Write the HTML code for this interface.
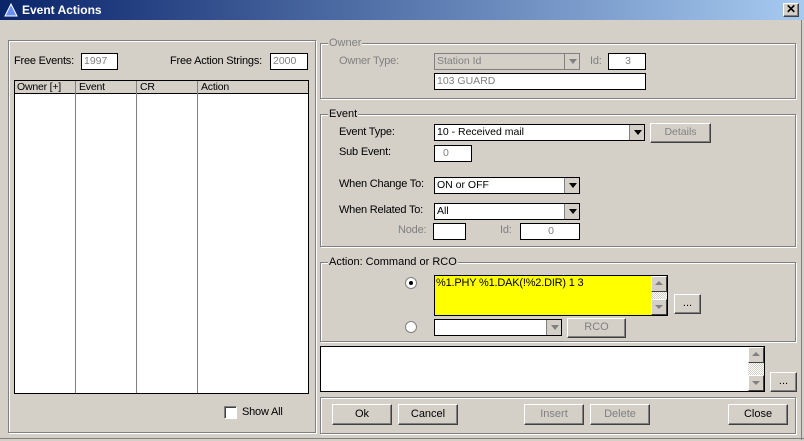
<!DOCTYPE html>
<html><head><style>
*{box-sizing:border-box;margin:0;padding:0}
body{width:804px;height:441px;background:#d4d0c8;font-family:"Liberation Sans",sans-serif;font-size:11px;color:#000;position:relative;overflow:hidden}
.a{position:absolute}
.title{left:0;top:0;width:804px;height:20px;background:linear-gradient(90deg,#0a246a,#a6caf0);color:#fff;font-weight:bold;font-size:12px;line-height:20px;padding-left:22px}
.grp{position:absolute;border:1px solid #808080;box-shadow:1px 1px 0 #fff, inset 1px 1px 0 #fff}
.lbl{position:absolute;background:#d4d0c8;padding:0 1px;line-height:12px;font-size:11px}
.gr{color:#808080}
.in{position:absolute;background:#fff;border:1px solid #000;line-height:14px;padding-left:2px;font-size:10.5px}
.dis{color:#808080}
.btn{position:absolute;background:#d4d0c8;border:1px solid;border-color:#fff #404040 #404040 #fff;box-shadow:inset -1px -1px 0 #808080;text-align:center;font-size:11px}
.arr{position:absolute;right:0;top:0;width:15px;height:100%;background:#d4d0c8;border-left:1px solid #808080}
.arr:after{content:"";position:absolute;left:4px;top:5px;border-left:4px solid transparent;border-right:4px solid transparent;border-top:5px solid #000}
.arr.g:after{border-top-color:#808080}
.sb{position:absolute;right:0;top:0;width:16px;height:100%;background:repeating-conic-gradient(#d4d0c8 0 25%,#fff 0 50%) 0 0/2px 2px}
.sbb{position:absolute;left:0;width:16px;height:16px;background:#d4d0c8;border:1px solid;border-color:#fff #404040 #404040 #fff}
.up:after,.dn:after{content:"";position:absolute;left:3px;border-left:4px solid transparent;border-right:4px solid transparent}
.up:after{top:4px;border-bottom:4px solid #808080}
.dn:after{top:5px;border-top:4px solid #808080}
.t{position:absolute;line-height:13px;font-size:11px;letter-spacing:-0.2px}
</style></head><body>
<div class="a title">Event Actions</div>
<svg class="a" style="left:4px;top:3px" width="14" height="14"><polygon points="7,1 13,13 1,13" fill="#6d8ff0" stroke="#fff" stroke-width="1"/></svg>
<div class="btn" style="left:783px;top:3px;width:16px;height:14px;font-size:12px;line-height:11px;font-weight:bold">✕</div>
<div class="a" style="left:0;top:438px;width:804px;height:1px;background:#808080"></div>
<div class="a" style="left:801px;top:20px;width:1px;height:420px;background:#808080"></div>

<div class="grp" style="left:8px;top:40px;width:308px;height:393px"></div>
<div class="t" style="left:14px;top:55px">Free Events:</div>
<div class="in dis" style="left:81px;top:53px;width:37px;height:17px">1997</div>
<div class="t" style="left:170px;top:55px">Free Action Strings:</div>
<div class="in dis" style="left:270px;top:53px;width:38px;height:17px">2000</div>
<div class="in" style="left:14px;top:80px;width:295px;height:314px;padding:0"></div>
<div class="a" style="left:15px;top:81px;width:293px;height:13px;background:#d4d0c8;border-bottom:1px solid #000"></div>
<div class="a" style="left:75px;top:81px;width:1px;height:312px;background:#808080"></div>
<div class="a" style="left:136px;top:81px;width:1px;height:312px;background:#808080"></div>
<div class="a" style="left:197px;top:81px;width:1px;height:312px;background:#808080"></div>
<div class="t" style="left:17px;top:81px;font-size:10.5px">Owner [+]</div>
<div class="t" style="left:79px;top:81px;font-size:10.5px">Event</div>
<div class="t" style="left:140px;top:81px;font-size:10.5px">CR</div>
<div class="t" style="left:201px;top:81px;font-size:10.5px">Action</div>
<div class="a" style="left:224px;top:406px;width:13px;height:13px;background:#fff;border:1px solid;border-color:#808080 #fff #fff #808080;box-shadow:inset 1px 1px 0 #404040"></div>
<div class="t" style="left:242px;top:406px">Show All</div>

<div class="grp" style="left:320px;top:43px;width:476px;height:56px"></div>
<div class="lbl gr" style="left:328px;top:37px">Owner</div>
<div class="t gr" style="left:339px;top:55px">Owner Type:</div>
<div class="in dis" style="left:434px;top:53px;width:146px;height:17px;background:#d4d0c8;border-color:#808080">Station Id<div class="arr g"></div></div>
<div class="t gr" style="left:590px;top:55px">Id:</div>
<div class="in dis" style="left:608px;top:53px;width:38px;height:17px;text-align:center">3</div>
<div class="in dis" style="left:434px;top:73px;width:212px;height:17px">103 GUARD</div>

<div class="grp" style="left:320px;top:114px;width:476px;height:133px"></div>
<div class="lbl" style="left:328px;top:108px">Event</div>
<div class="t" style="left:339px;top:126px">Event Type:</div>
<div class="in" style="left:434px;top:124px;width:211px;height:17px">10 - Received mail<div class="arr"></div></div>
<div class="btn dis" style="left:650px;top:123px;width:61px;height:20px;line-height:17px;font-size:10.5px">Details</div>
<div class="t" style="left:339px;top:146px">Sub Event:</div>
<div class="in dis" style="left:434px;top:145px;width:38px;height:17px;padding-left:8px">0</div>
<div class="t" style="left:339px;top:178px">When Change To:</div>
<div class="in" style="left:434px;top:177px;width:146px;height:17px">ON or OFF<div class="arr"></div></div>
<div class="t" style="left:339px;top:204px">When Related To:</div>
<div class="in" style="left:434px;top:203px;width:146px;height:17px">All<div class="arr"></div></div>
<div class="t gr" style="left:398px;top:224px">Node:</div>
<div class="in" style="left:433px;top:223px;width:33px;height:17px"></div>
<div class="t gr" style="left:500px;top:224px">Id:</div>
<div class="in dis" style="left:520px;top:223px;width:60px;height:17px;text-align:center">0</div>

<div class="grp" style="left:320px;top:262px;width:476px;height:80px"></div>
<div class="lbl" style="left:328px;top:256px">Action: Command or RCO</div>
<div class="a" style="left:405px;top:277px;width:12px;height:12px;border-radius:50%;background:#fff;border:1px solid #808080"><div class="a" style="left:3px;top:3px;width:4px;height:4px;border-radius:50%;background:#000"></div></div>
<div class="in" style="left:434px;top:275px;width:234px;height:41px;background:#ff0;padding:0"><span class="t" style="left:1px;top:1px">%1.PHY %1.DAK(!%2.DIR) 1 3</span><div class="sb"><div class="sbb up" style="top:0"></div><div class="sbb dn" style="bottom:0"></div></div></div>
<div class="btn" style="left:674px;top:294px;width:27px;height:20px;line-height:16px">...</div>
<div class="a" style="left:405px;top:321px;width:12px;height:12px;border-radius:50%;background:#fff;border:1px solid #808080"></div>
<div class="in" style="left:434px;top:319px;width:128px;height:17px"><div class="arr g"></div></div>
<div class="btn dis" style="left:567px;top:318px;width:59px;height:20px;line-height:17px">RCO</div>

<div class="in" style="left:320px;top:346px;width:445px;height:46px;padding:0"><div class="sb" style="top:0"><div class="sbb up" style="top:0"></div><div class="sbb dn" style="bottom:0"></div></div></div>
<div class="btn" style="left:770px;top:372px;width:27px;height:20px;line-height:16px">...</div>

<div class="grp" style="left:320px;top:397px;width:476px;height:37px"></div>
<div class="btn" style="left:332px;top:404px;width:60px;height:21px;line-height:19px">Ok</div>
<div class="btn" style="left:398px;top:404px;width:60px;height:21px;line-height:19px">Cancel</div>
<div class="btn dis" style="left:524px;top:404px;width:60px;height:21px;line-height:19px">Insert</div>
<div class="btn dis" style="left:590px;top:404px;width:60px;height:21px;line-height:19px">Delete</div>
<div class="btn" style="left:728px;top:404px;width:60px;height:21px;line-height:19px">Close</div>
</body></html>
